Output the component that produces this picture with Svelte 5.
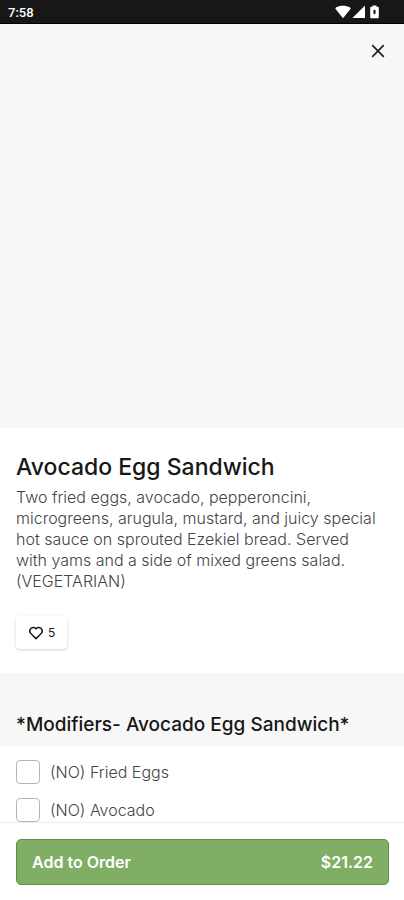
<script>
  let liked = $state(false);
  let likes = $derived(liked ? 6 : 5);

  const item = {
    name: "Avocado Egg Sandwich",
    description:
      "Two fried eggs, avocado, pepperoncini, microgreens, arugula, mustard, and juicy special hot sauce on sprouted Ezekiel bread. Served with yams and a side of mixed greens salad. (VEGETARIAN)",
    price: 21.22,
  };

  let modifiers = $state([
    { id: "no-eggs", label: "(NO) Fried Eggs", checked: false },
    { id: "no-avocado", label: "(NO) Avocado", checked: false },
  ]);
</script>

<div class="screen">
  <header class="status-bar">
    <span>7:58</span>
    <div class="status-icons">
      <svg width="16" height="14" viewBox="0 0 16 14" fill="currentColor">
        <path d="M8 13.2 0.6 4.1C0.2 3.5 0.3 3 0.9 2.6 5 0.1 11 0.1 15.1 2.6c.6.4.7.9.3 1.5z" />
      </svg>
      <svg width="13" height="14" viewBox="0 0 13 14" fill="currentColor">
        <path d="M13 0.4V13H0.4z" />
      </svg>
      <svg class="battery" width="9" height="14" viewBox="0 0 9 14">
        <path
          fill="currentColor"
          d="M2.5 0.5h4v1.2h1.2c.7 0 1.1.4 1.1 1.1v9.4c0 .7-.4 1.1-1.1 1.1H1.3c-.7 0-1.1-.4-1.1-1.1V2.8c0-.7.4-1.1 1.1-1.1h1.2z"
        />
        <path fill="#171717" d="M3.4 5.4 4.5 4.4 5.6 5.4V8L4.5 9.8 3.4 8z" />
      </svg>
    </div>
  </header>

  <main class="content">
    <div class="hero">
      <button class="close" aria-label="Close">
        <svg width="14" height="14" viewBox="0 0 14 14" fill="none" stroke="currentColor" stroke-width="1.7">
          <path d="M1.2 1.2 12.8 12.8M12.8 1.2 1.2 12.8" />
        </svg>
      </button>
    </div>

    <section class="details">
      <h1>{item.name}</h1>
      <p>{item.description}</p>
      <button class="like" aria-label="Like" aria-pressed={liked} onclick={() => (liked = !liked)}>
        <svg
          width="14"
          height="14"
          viewBox="0 0 14 14"
          fill="none"
          stroke="currentColor"
          stroke-width="1.5"
          stroke-linejoin="round"
        >
          <path
            d="M7 2.9C5.9 1.2 3.7.9 2.2 2.2.7 3.5.5 5.8 1.8 7.4 3.1 9.1 5.2 11.1 7 12.6 8.8 11.1 10.9 9.1 12.2 7.4 13.5 5.8 13.3 3.5 11.8 2.2 10.3.9 8.1 1.2 7 2.9z"
          />
        </svg>
        <span>{likes}</span>
      </button>
    </section>

    <h2>*Modifiers- {item.name}*</h2>
    <div class="modifiers">
      {#each modifiers as modifier (modifier.id)}
        <label>
          <input type="checkbox" bind:checked={modifier.checked} />
          {modifier.label}
        </label>
      {/each}
    </div>
  </main>

  <footer>
    <button class="add">
      <span>Add to Order</span>
      <span>${item.price.toFixed(2)}</span>
    </button>
  </footer>
</div>

<style>
  .screen {
    display: flex;
    flex-direction: column;
    height: 100vh;
    background: #ffffff;
    color: #171717;
    font-family: Inter, sans-serif;
  }

  button {
    font-family: inherit;
    cursor: pointer;
  }

  .status-bar {
    display: flex;
    flex-shrink: 0;
    align-items: center;
    justify-content: space-between;
    box-sizing: border-box;
    height: 24px;
    padding: 1px 25px 0 8px;
    border-bottom: 1px solid #000000;
    background: #171717;
    color: #ffffff;
    font-family: Roboto, sans-serif;
    font-size: 13px;
    font-weight: 500;
  }

  .status-icons {
    display: flex;
    gap: 1px;
  }

  .battery {
    margin-left: 4px;
  }

  .content {
    flex: 1;
    min-height: 0;
    overflow: hidden auto;
    scrollbar-width: none;
  }

  .hero {
    display: flex;
    align-items: flex-start;
    justify-content: flex-end;
    box-sizing: border-box;
    aspect-ratio: 1;
    padding: 12px 11px;
    background: #f7f7f7;
  }

  .close {
    display: grid;
    place-items: center;
    width: 30px;
    height: 30px;
    padding: 0;
    border: none;
    background: none;
    color: #222222;
  }

  .details {
    padding: 24px 24px 24px 16px;
  }

  h1 {
    margin: 0 0 5px;
    font-size: 23px;
    font-weight: 500;
    line-height: 30px;
  }

  p {
    margin: 0 0 24px;
    color: #444444;
    font-size: 16px;
    font-weight: 300;
    line-height: 21px;
  }

  .like {
    display: flex;
    align-items: center;
    gap: 5px;
    height: 33px;
    padding: 0 12px 0 13px;
    border: none;
    border-radius: 4px;
    background: #ffffff;
    box-shadow: 0 1px 3px rgba(0, 0, 0, 0.18);
    color: #171717;
    font-size: 12px;
  }

  h2 {
    margin: 0;
    padding: 39px 16px 8px;
    background: #f7f7f7;
    font-size: 19px;
    font-weight: 500;
    line-height: 26px;
  }

  .modifiers {
    display: flex;
    flex-direction: column;
    gap: 14px;
    padding: 14px 16px;
  }

  label {
    display: flex;
    align-items: center;
    gap: 10px;
    color: #444444;
    font-size: 16px;
    font-weight: 300;
    line-height: 24px;
    cursor: pointer;
  }

  input {
    appearance: none;
    box-sizing: border-box;
    width: 24px;
    height: 24px;
    margin: 0;
    border: 1px solid #b5b5b5;
    border-radius: 4px;
    background: #ffffff;
  }

  input:checked {
    border-color: #5d8f47;
    background: #7fae64;
  }

  footer {
    flex-shrink: 0;
    padding: 16px 15px 15px 16px;
    border-top: 1px solid #eeeeee;
    background: #ffffff;
  }

  .add {
    display: flex;
    align-items: center;
    justify-content: space-between;
    box-sizing: border-box;
    width: 100%;
    height: 46px;
    padding: 0 15px;
    border: 1px solid #5d8f47;
    border-radius: 5px;
    background: #7fae64;
    color: #ffffff;
    font-size: 16px;
    font-weight: 600;
  }
</style>
